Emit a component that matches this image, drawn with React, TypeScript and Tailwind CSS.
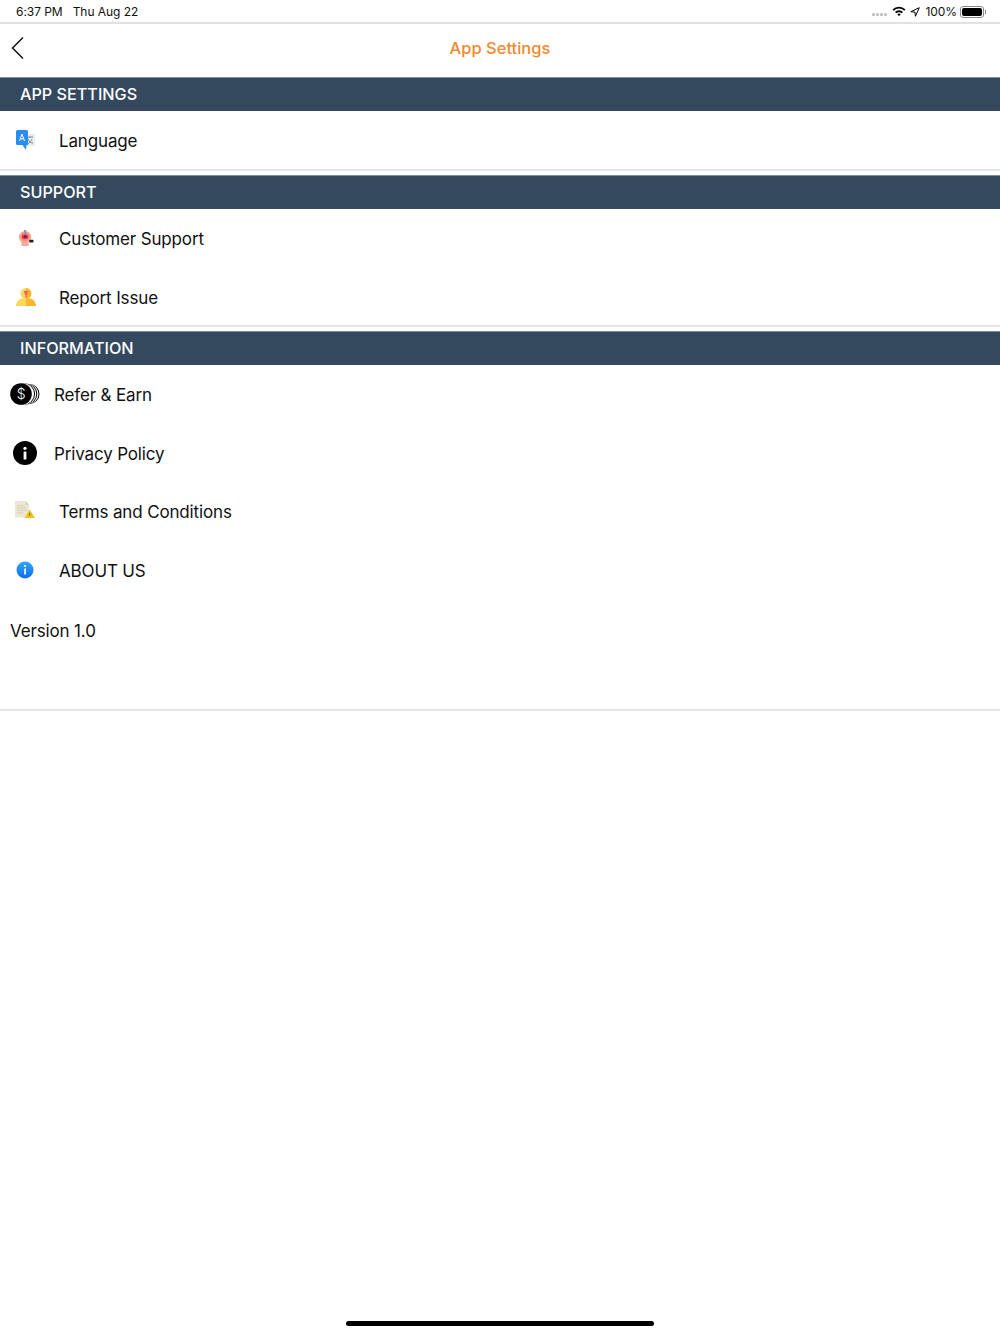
import type { ReactNode } from "react";

const font = "font-['Inter','Liberation_Sans',sans-serif]";

function LanguageIcon() {
  return (
    <svg width="20" height="22" viewBox="0 0 20 22">
      <rect x="8" y="4" width="11" height="12" rx="1" fill="#e8edf3" />
      <path d="M11 7h6M14 7v1M12 9c1 3 3 4 5 4M16 9c-.6 2-2 3.500-4 4.500" stroke="#7d8790" strokeWidth="1" fill="none" />
      <path d="M1.500 0h9A1.500 1.500 0 0 1 12 1.500V15H10.500L10 20 6.500 15H1.500A1.500 1.500 0 0 1 0 13.500v-12A1.500 1.500 0 0 1 1.500 0z" fill="#2a8cf0" />
      <path d="M3.500 11 6 4l2.500 7M4.500 8.800h3" stroke="#fff" strokeWidth="1" fill="none" />
    </svg>
  );
}

function SupportIcon() {
  return (
    <svg width="16" height="16" viewBox="0 0 18 18">
      <path d="M4 18v-4c-1-1-3-3-3-6a7 7 0 0 1 14 0c0 3-2 4.500-3 5v5z" fill="#f8a894" />
      <circle cx="8" cy="7.500" r="5" fill="#ee8a80" />
      <rect x="6.800" y="0" width="2.400" height="5" fill="#8a9aa5" />
      <ellipse cx="8" cy="7.500" rx="3.500" ry="2.500" fill="#d8264f" />
      <circle cx="8" cy="7.500" r="1.300" fill="#5c2440" />
      <rect x="12.500" y="11" width="5" height="3" rx="1" fill="#222" />
    </svg>
  );
}

function ReportIcon() {
  return (
    <svg width="20" height="18" viewBox="0 0 20 18">
      <path d="M0 18c0-4 3-7 6-7.500h4V18z" fill="#fcd75a" />
      <path d="M10 10.500h4c3 .5 6 3.500 6 7.500H10z" fill="#fbb62c" />
      <path d="M10 0a5.500 5.500 0 0 0 0 11z" fill="#fcd75a" />
      <path d="M10 0a5.500 5.500 0 0 1 0 11z" fill="#fbb62c" />
      <path d="M8 3h4l-1.300 4.500H9.300z" fill="#f0566a" />
      <rect x="9.300" y="8" width="1.400" height="1.400" fill="#f0566a" />
    </svg>
  );
}

function ReferIcon() {
  return (
    <svg width="30" height="22" viewBox="0 0 30 22">
      <circle cx="19.500" cy="11" r="10" fill="#000" />
      <circle cx="18.500" cy="11" r="10" fill="#fff" />
      <circle cx="17" cy="11" r="10.300" fill="#000" />
      <circle cx="16" cy="11" r="10.300" fill="#fff" />
      <circle cx="14.500" cy="11" r="10.600" fill="#000" />
      <circle cx="13.500" cy="11" r="10.600" fill="#fff" />
      <circle cx="11" cy="11" r="10.800" fill="#000" />
      <text x="11" y="16" textAnchor="middle" fontSize="14" fontWeight="300" fill="#fff" fontFamily="Inter, sans-serif">$</text>
    </svg>
  );
}

function InfoIcon() {
  return (
    <svg width="24" height="24" viewBox="0 0 24 24">
      <circle cx="12" cy="12" r="12" fill="#000" />
      <rect x="10.600" y="10.500" width="2.800" height="8" rx="0.500" fill="#fff" />
      <circle cx="12" cy="7.300" r="1.600" fill="#fff" />
    </svg>
  );
}

function TermsIcon() {
  return (
    <svg width="20" height="17" viewBox="0 0 21 18">
      <path d="M0 0h11l4 4v13.500H0z" fill="#ece6d2" />
      <path d="M11 0v4h4z" fill="#d9d2bb" />
      <path d="M2 5h8M2 7.500h10M2 10h10M2 12.500h7" stroke="#d8d0b8" strokeWidth="1" />
      <path d="M15.500 9 21 18H10z" fill="#f3c11b" />
      <rect x="15" y="12.500" width="1" height="3" fill="#6b5a10" />
    </svg>
  );
}

function AboutIcon() {
  return (
    <svg width="18" height="18" viewBox="0 0 18 18">
      <defs>
        <linearGradient id="about" x1="0" y1="0" x2="0" y2="1">
          <stop offset="0" stopColor="#35a4f5" />
          <stop offset="1" stopColor="#0b6fe8" />
        </linearGradient>
      </defs>
      <circle cx="9" cy="9" r="8.500" fill="url(#about)" />
      <rect x="8.200" y="7.500" width="1.700" height="6" fill="#fff" />
      <circle cx="9" cy="5" r="1.100" fill="#fff" />
    </svg>
  );
}

function SectionHeader({ title }: { title: string }) {
  return (
    <div className="h-[34px] bg-[#34495e] pl-5 flex items-center border-t border-[#7f8c99] text-white text-[16.200px] font-medium leading-none">
      {title}
    </div>
  );
}

function Row({ icon, label, inset }: { icon: ReactNode; label: string; inset?: boolean }) {
  return (
    <div className={`h-[58.500px] flex items-center text-[17px] tracking-[-0.15px] text-[#111] ${inset ? "pl-[10px]" : "pl-[15px]"}`}>
      <div className="w-[44px] shrink-0 flex items-center">
        {icon}
      </div>
      <span className="pt-[3px]">{label}</span>
    </div>
  );
}

export default function App() {
  return (
    <div className={`${font} h-[1334px] bg-white flex flex-col`}>

      <div className="h-[24px] shrink-0 pt-[1px] border-b-2 border-[#e2e2e2] flex items-center justify-between pl-4 pr-[14px] text-[12px] tracking-[-0.05px] text-[#111]">
        <div className="flex gap-[10px]">
          <span>6:37 PM</span>
          <span>Thu Aug 22</span>
        </div>
        <div className="flex items-center">
          <div className="flex gap-[1px] mr-[5px] mt-[5px]">
            <span className="w-[3px] h-[3px] rounded-full bg-[#bbb]" />
            <span className="w-[3px] h-[3px] rounded-full bg-[#bbb]" />
            <span className="w-[3px] h-[3px] rounded-full bg-[#bbb]" />
            <span className="w-[3px] h-[3px] rounded-full bg-[#bbb]" />
          </div>
          <svg width="14" height="11" viewBox="0 0 14 11" className="mr-[4px]">
            <path d="M.5 3.500a9 9 0 0 1 13 0l-1.300 1.300a7.200 7.200 0 0 0-10.400 0z" fill="#000" />
            <path d="M3 6a5.500 5.500 0 0 1 8 0L9.700 7.300a3.700 3.700 0 0 0-5.400 0z" fill="#000" />
            <path d="M5.300 8.300a2.400 2.400 0 0 1 3.400 0L7 10.300z" fill="#000" />
          </svg>
          <svg width="10" height="10" viewBox="0 0 10 10" className="mr-[5px]">
            <path d="M9.300.7 .8 4.700l4.200.4.400 4.200z" fill="none" stroke="#000" strokeWidth="1" strokeLinejoin="round" />
          </svg>
          <span className="mr-[3px]">100%</span>
          <div className="w-[24px] h-[12px] rounded-[3px] border border-[#888] p-[1px]">
            <div className="w-full h-full rounded-[2px] bg-black" />
          </div>
          <div className="w-[1px] h-[4px] bg-[#888] ml-[1px]" />
        </div>
      </div>

      <div className="h-[53px] shrink-0 relative flex items-center justify-center pb-[4px]">
        <svg width="14" height="24" viewBox="0 0 14 24" className="absolute left-[11px] top-[12px]">
          <path d="M12 1.500 1.500 12 12 22.500" fill="none" stroke="#111" strokeWidth="1.500" />
        </svg>
        <span className="text-[#f08a30] text-[16.500px] font-medium">App Settings</span>
      </div>

      <SectionHeader title="APP SETTINGS" />
      <div className="h-[60px] border-b-2 border-[#e4e4e4] mb-[4px]">
        <Row icon={<div className="pl-[1px] pt-[2px]"><LanguageIcon /></div>} label="Language" />
      </div>

      <SectionHeader title="SUPPORT" />
      <div className="h-[118px] border-b-2 border-[#e4e4e4] mb-[4px]">
        <Row icon={<div className="pl-[3px]"><SupportIcon /></div>} label="Customer Support" />
        <Row icon={<div className="pl-[1px]"><ReportIcon /></div>} label="Report Issue" />
      </div>

      <SectionHeader title="INFORMATION" />
      <div className="h-[346px] border-b-2 border-[#e4e4e4]">
        <Row inset icon={<ReferIcon />} label="Refer & Earn" />
        <Row inset icon={<div className="pl-[3px]"><InfoIcon /></div>} label="Privacy Policy" />
        <Row icon={<div className="pb-[4px]"><TermsIcon /></div>} label="Terms and Conditions" />
        <Row icon={<div className="pl-[1px]"><AboutIcon /></div>} label="ABOUT US" />
        <div className="pl-[10px] pt-[6px] h-[60px] flex items-center text-[17px] tracking-[-0.15px] text-[#111]">
          Version 1.0
        </div>
      </div>

      <div className="mt-auto mb-[8px] flex justify-center">
        <div className="w-[308px] h-[5px] rounded-full bg-black" />
      </div>
    </div>
  );
}
